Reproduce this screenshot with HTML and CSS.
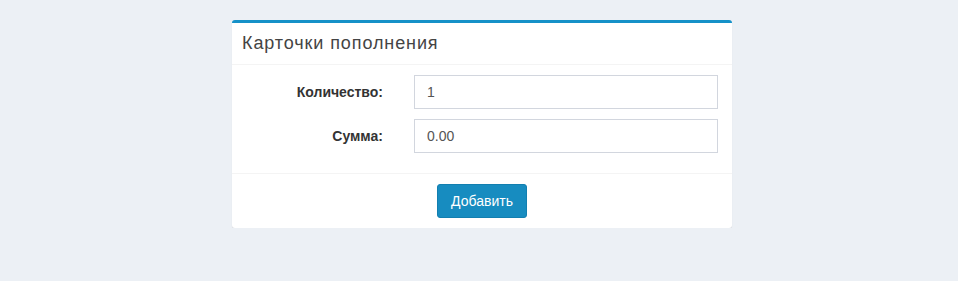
FILE: index.html
```html
<!DOCTYPE html>
<html lang="ru">
<head>
    <meta charset="UTF-8">
    <title>Карточки пополнения</title>
    <link rel="stylesheet" href="styles.css">
</head>
<body>
    <div class="box">
        <div class="box-header">
            <h3 class="box-title">Карточки пополнения</h3>
        </div>
        <form class="form-horizontal">
            <div class="box-body">
                <div class="form-group">
                    <label for="count">Количество:</label>
                    <input type="text" id="count" class="form-control" value="1">
                </div>
                <div class="form-group">
                    <label for="sum">Сумма:</label>
                    <input type="text" id="sum" class="form-control" value="0.00">
                </div>
            </div>
            <div class="box-footer">
                <button type="button" class="btn">Добавить</button>
            </div>
        </form>
    </div>
</body>
</html>
```

FILE: styles.css
```css
body {
    margin: 0;
    padding: 20px 0 0 232px;
    background: #ecf0f5;
    font-family: "Liberation Sans", Arial, sans-serif;
    font-size: 14px;
    color: #333;
}
.box {
    width: 500px;
    background: #fff;
    border-top: 3px solid #1591c8;
    border-radius: 3px;
    box-shadow: 0 1px 1px rgba(0,0,0,0.1);
}
.box-header {
    padding: 10px;
    border-bottom: 1px solid #f4f4f4;
}
.box-title {
    margin: 0;
    font-size: 18px;
    font-weight: normal;
    line-height: 21px;
    letter-spacing: 0.9px;
    color: #444;
}
.box-body {
    padding: 10px;
}
.form-group {
    display: grid;
    grid-template-columns: 141px 304px;
    column-gap: 31px;
    align-items: center;
    margin-bottom: 10px;
}
.form-group label {
    text-align: right;
    font-weight: bold;
    color: #333;
}
.form-control {
    box-sizing: border-box;
    height: 34px;
    padding: 6px 12px;
    border: 1px solid #d2d6de;
    border-radius: 0;
    font-family: inherit;
    font-size: 14px;
    color: #555;
    outline: none;
}
.box-footer {
    padding: 10px;
    border-top: 1px solid #f4f4f4;
    text-align: center;
}
.btn {
    height: 34px;
    padding: 6px 13px;
    background: #178cc0;
    border: 1px solid #127fb0;
    border-radius: 3px;
    color: #fff;
    font-family: inherit;
    font-size: 14px;
    cursor: pointer;
}
```
